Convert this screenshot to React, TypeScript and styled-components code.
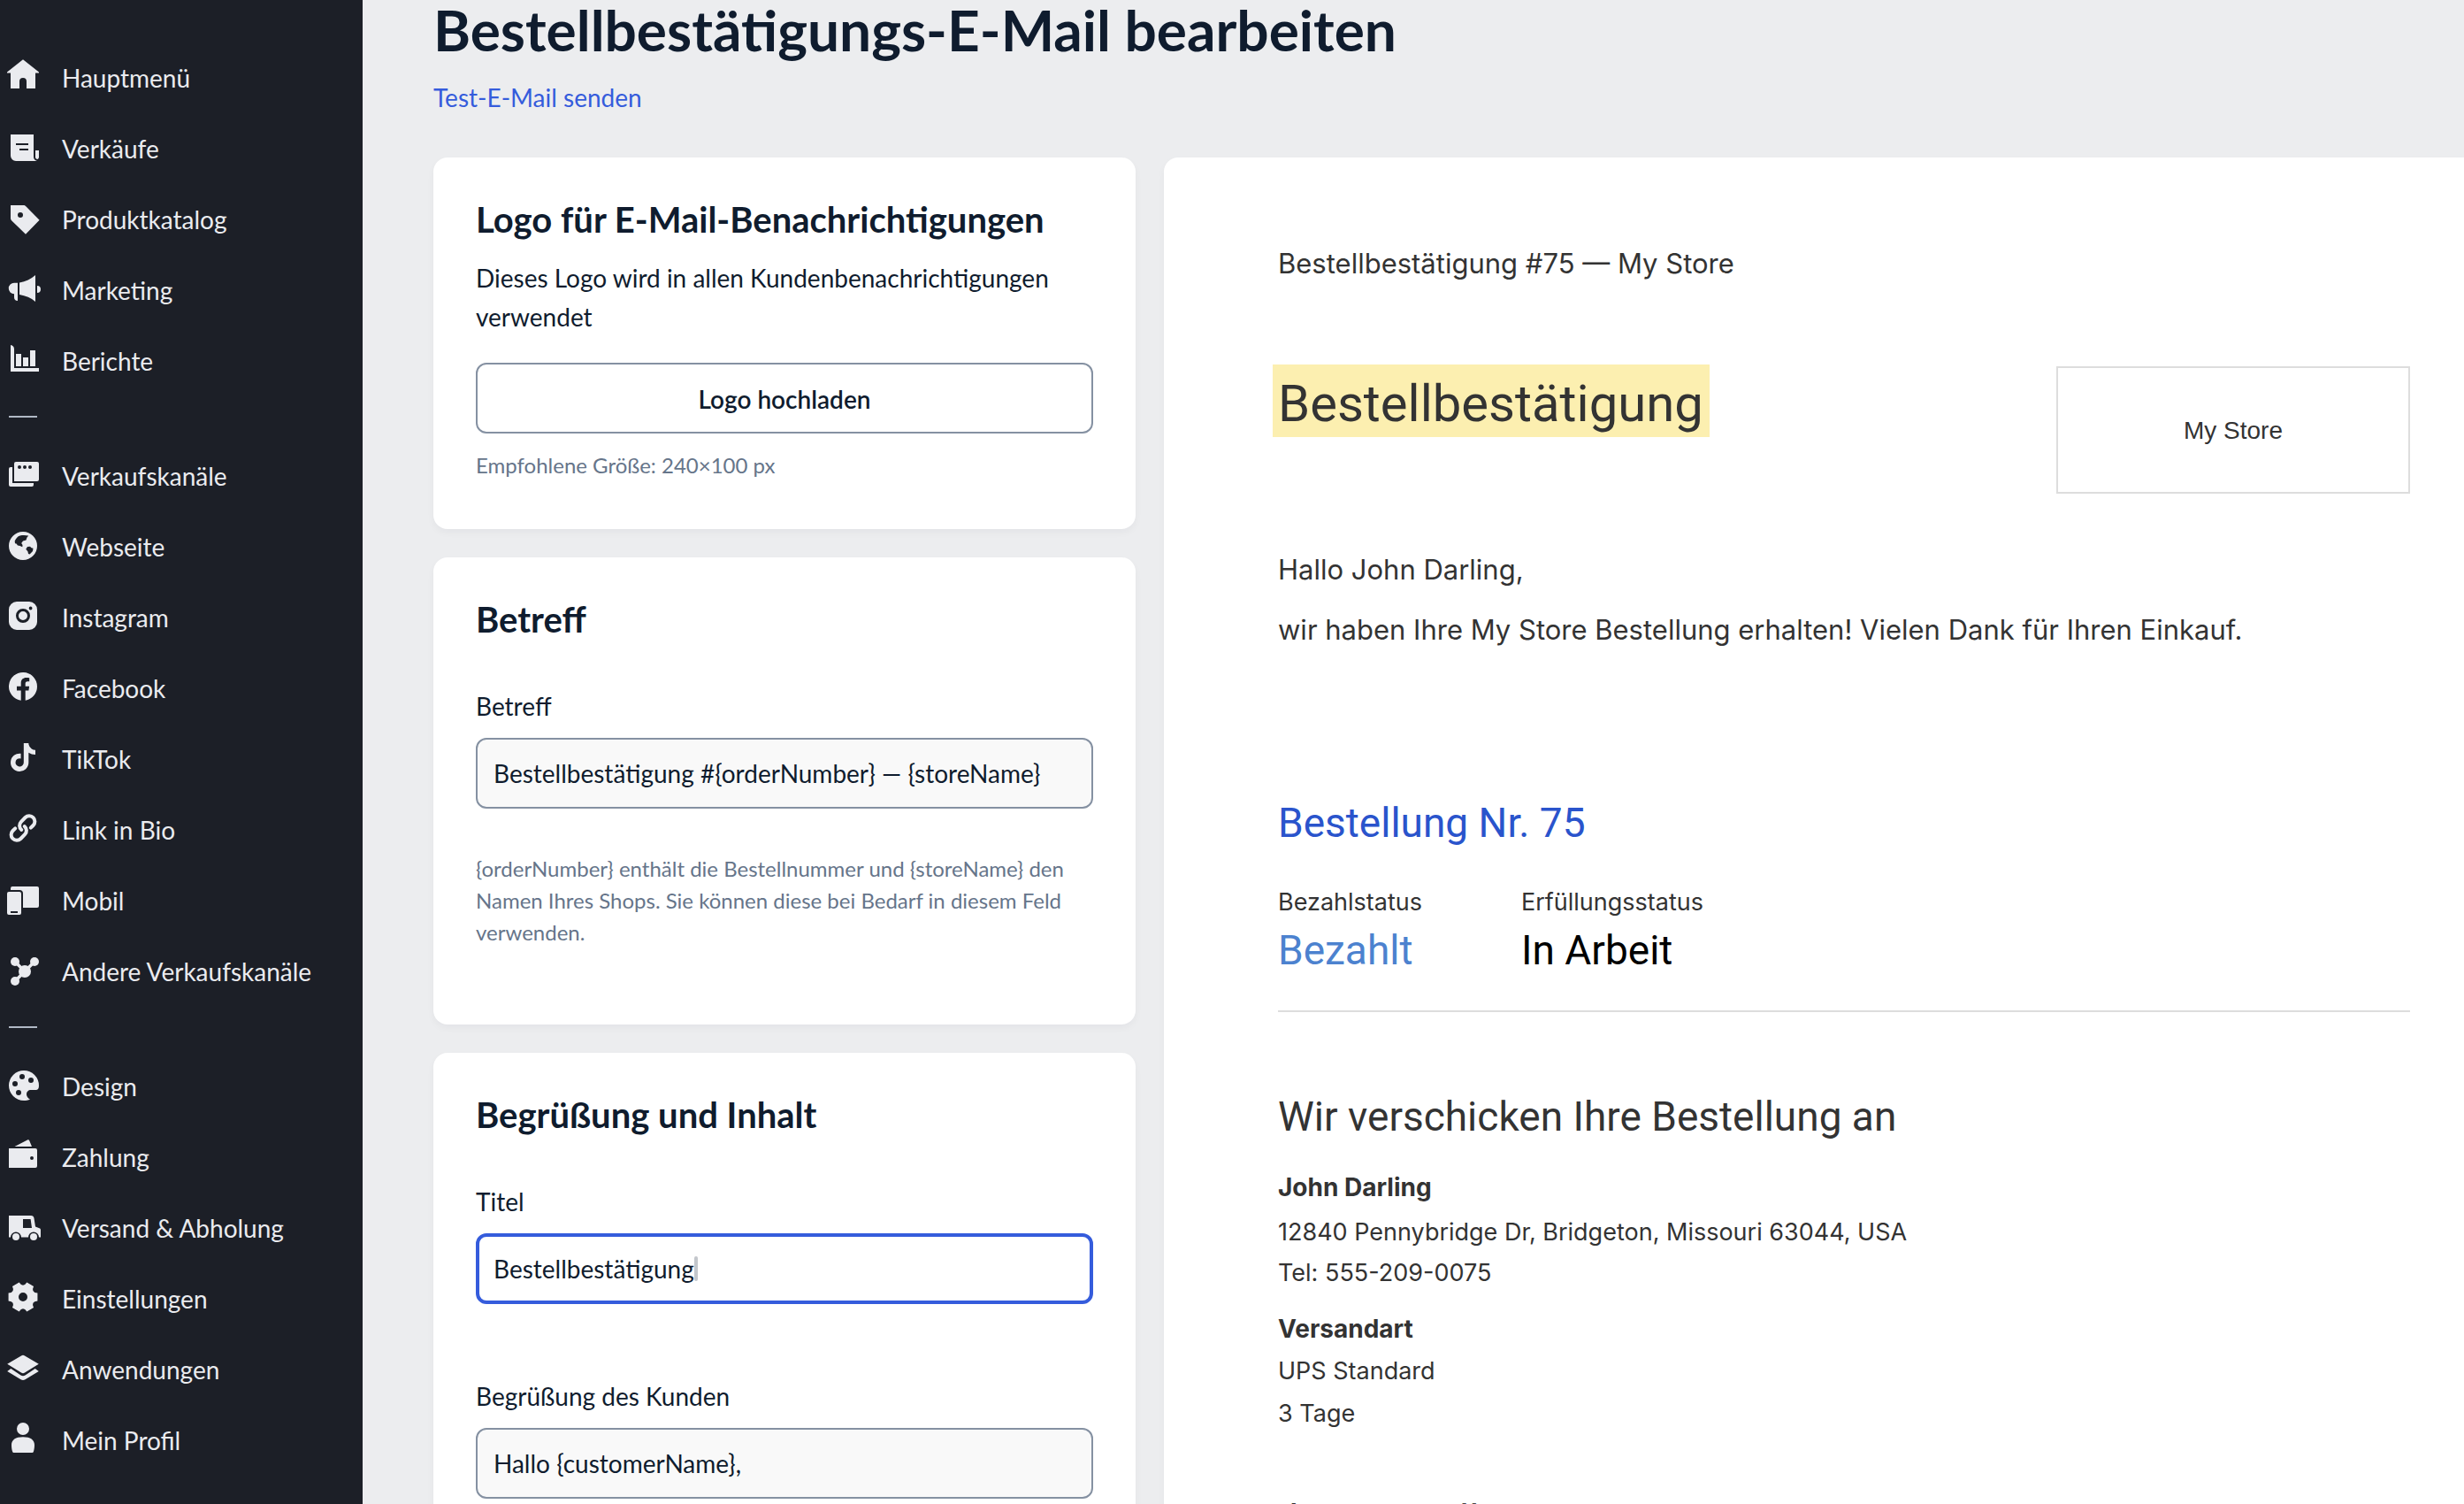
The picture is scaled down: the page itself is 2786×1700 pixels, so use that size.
import React, { useId, useState } from 'react';
import styled, { createGlobalStyle } from 'styled-components';

const GlobalStyle = createGlobalStyle`
  *, *::before, *::after { box-sizing: border-box; }
  body {
    margin: 0;
    background: #ecedef;
    font-family: Lato, "Open Sans", sans-serif;
    color: #0f1c2e;
  }
  h1, h2, h3, p, dl, dt, dd, ul { margin: 0; padding: 0; }
`;

const Page = styled.div`
  display: flex;
  height: 100vh;
  overflow: hidden;
`;

/* ---------- Sidebar ---------- */

const Sidebar = styled.nav`
  flex: 0 0 410px;
  padding-top: 48px;
  background: #1c1f27;
`;

const MenuList = styled.ul`
  list-style: none;

  & + & {
    margin-top: 22px;
    padding-top: 28px;
    background: linear-gradient(#b0b8c5, #b0b8c5) 10px 0 / 32px 2px no-repeat;
  }
`;

const MenuLink = styled.a`
  display: flex;
  align-items: center;
  gap: 22px;
  height: 80px;
  padding-left: 4px;
  color: #eaebef;
  font-size: 28px;
  line-height: 44px;
  text-decoration: none;
`;

const MenuIcon = styled.svg`
  flex: none;
  width: 44px;
  height: 48px;
  fill: currentColor;
`;

const polar = (r: number, deg: number) => {
  const a = (deg * Math.PI) / 180;
  return `${(26 + r * Math.cos(a)).toFixed(2)} ${(22 + r * Math.sin(a)).toFixed(2)}`;
};

const gearPath =
  `M${polar(17, -15)}` +
  [0, 60, 120, 180, 240, 300]
    .map((a) => `L${polar(17, a + 15)}Q${polar(10, a + 30)} ${polar(17, a + 45)}`)
    .join('') +
  'ZM31 22a5 5 0 1 0-10 0a5 5 0 1 0 10 0Z';

const icons: Record<string, React.ReactNode> = {
  home: <path d="M26 3.2 44 17.4V18.4H40V36H30V28a4 4 0 0 0-8 0V36H12V18.4H8V17.4Z" />,
  sales: (
    <path
      fillRule="evenodd"
      d="M12 8H38V33a5 5 0 0 0 4 5H18a6 6 0 0 1-6-6ZM18 18v2h14v-2ZM22 24v2h10v-2ZM40 26h4v7.5a2.6 2.6 0 0 1-1.6 2.5c-1.4 0-2.4-1-2.4-2.5Z"
    />
  ),
  tag: (
    <path
      fillRule="evenodd"
      d="M12 8H26.5c1.2 0 2 .4 2.8 1.2L44.6 24.8 29 40.7 13 25.2c-.7-.7-1-1.4-1-2.4ZM26 19a3 3 0 1 0-6 0a3 3 0 1 0 6 0Z"
    />
  ),
  megaphone: (
    <path d="M22 15.4C29 14.6 35 11.4 40 7V37c-5-4.4-11-6.600-18-8ZM20 15.800V36c-2.500 0-4-1.500-4-4V28.200a6.200 6.200 0 0 1 0-12.400ZM42 19a4 4 0 0 1 0 8Z" />
  ),
  chart: (
    <path d="M12 6c2.500.4 4 2 4 4.500V32H44V36H12ZM18 16h6V30h-6ZM26 20h6V30h-6ZM34 12h6V30h-6Z" />
  ),
  channels: (
    <path
      fillRule="evenodd"
      d="M18 8H42a2 2 0 0 1 2 2V28a2 2 0 0 1-2 2H16V10a2 2 0 0 1 2-2ZM24 14a2 2 0 1 0-4 0a2 2 0 1 0 4 0ZM30 14a2 2 0 1 0-4 0a2 2 0 1 0 4 0ZM36 14a2 2 0 1 0-4 0a2 2 0 1 0 4 0ZM12 14h2V32H38v2a2 2 0 0 1-2 2H12a2 2 0 0 1-2-2V16a2 2 0 0 1 2-2Z"
    />
  ),
  globe: (
    <path
      fillRule="evenodd"
      d="M42 23a16 16 0 1 0-32 0a16 16 0 1 0 32 0ZM16.700 17.500C18 14.500 20 12.300 22.500 11.500c3-.6 6.500-.6 9.700.1L30.500 13.500 29.500 16.500 26 17.500 24.200 20 25.500 22 25.300 24.200 22.500 23 20 22.600 18.500 20.500 17 20.200ZM29.300 26.700 31 24 34 23.700 35.500 25.300 37.500 25.800 37 29 33.600 32.600 32 32 31.500 29.500Z"
    />
  ),
  instagram: (
    <path
      fillRule="evenodd"
      d="M19 6H33a9 9 0 0 1 9 9V29a9 9 0 0 1-9 9H19a9 9 0 0 1-9-9V15a9 9 0 0 1 9-9ZM34 22a8 8 0 1 0-16 0a8 8 0 1 0 16 0ZM31 22a5 5 0 1 1-10 0a5 5 0 1 1 10 0ZM36.500 13.500a1.900 1.900 0 1 0-3.800 0a1.900 1.900 0 1 0 3.800 0Z"
    />
  ),
  facebook: (
    <path d="M42 22a16 16 0 1 0-18.300 15.800V26.500H19v-4.800h4.700v-3.600c0-4 2.300-6.200 6-6.200 1.300 0 2.400.1 3.500.3v4h-2c-2 0-2.500 1-2.500 2.400v3.100h4.400l-.7 4.800h-3.700V37.800A16 16 0 0 0 42 22Z" />
  ),
  tiktok: (
    <path
      transform="translate(12 6) scale(.0625)"
      d="M448 209.910a210.060 210.060 0 0 1-122.770-39.250V349.380A162.550 162.550 0 1 1 185 188.310V278.200a74.620 74.620 0 1 0 52.230 71.180V0h88a121.180 121.180 0 0 0 1.860 22.170A122.180 122.180 0 0 0 381 102.390a121.430 121.430 0 0 0 67 20.140Z"
    />
  ),
  link: (
    <g fill="none" stroke="currentColor" strokeWidth="4" strokeLinecap="round">
      <path d="M34.800 21.700 37.500 19A6.300 6.300 0 0 0 28.600 10L23.900 14.800A6.300 6.300 0 0 0 24.300 24" />
      <path d="M17.200 22.300 14.500 25A6.300 6.300 0 0 0 23.400 34L28.100 29.200A6.300 6.300 0 0 0 27.700 20" />
    </g>
  ),
  mobile: (
    <path
      fillRule="evenodd"
      d="M12 12V10a2 2 0 0 1 2-2H42a2 2 0 0 1 2 2V30a2 2 0 0 1-2 2H26V16a4 4 0 0 0-4-4ZM10 14H22a2 2 0 0 1 2 2V38a2 2 0 0 1-2 2H10a2 2 0 0 1-2-2V16a2 2 0 0 1 2-2ZM12 36v2h8v-2Z"
    />
  ),
  nodes: (
    <g>
      <path d="M17 13 28 24 39 13M28 24 17 35" stroke="currentColor" strokeWidth="3.500" fill="none" />
      <circle cx="17" cy="13" r="5" />
      <circle cx="39" cy="13" r="5" />
      <circle cx="17" cy="35" r="5" />
      <circle cx="28" cy="24" r="7" />
    </g>
  ),
  palette: (
    <path
      fillRule="evenodd"
      d="M27 6a17 17 0 0 0 0 34c2.500 0 4.900-.5 7-1.300-2.600-1.500-4-3.600-4-5.700 0-3 2-5 5-5h5.500C43 28 44 26.200 44 23A17 17 0 0 0 27 6ZM28 13a3 3 0 1 0-6 0a3 3 0 1 0 6 0ZM38 17a3 3 0 1 0-6 0a3 3 0 1 0 6 0ZM20 21a3 3 0 1 0-6 0a3 3 0 1 0 6 0ZM24 31a3 3 0 1 0-6 0a3 3 0 1 0 6 0Z"
    />
  ),
  wallet: (
    <path
      fillRule="evenodd"
      d="M16.500 12 31 4.500c.9-.5 1.700-.3 2.100.6L36 12ZM10 14H40a2 2 0 0 1 2 2V34a2 2 0 0 1-2 2H10ZM38 25a2 2 0 1 0-4 0a2 2 0 1 0 4 0Z"
    />
  ),
  truck: (
    <g>
      <path
        fillRule="evenodd"
        d="M10 10H35c2 0 3.200 1 3.500 3L40 22.500 44.500 24.200c1 .4 1.500 1.100 1.500 2.100V34.500H44a6 6 0 0 0-12 0H24a6 6 0 0 0-12 0H10ZM26 14V24H36L34.600 14Z"
      />
      <circle cx="18" cy="34" r="4" />
      <circle cx="38" cy="34" r="4" />
    </g>
  ),
  gear: <path fillRule="evenodd" d={gearPath} />,
  layers: (
    <path d="M24 8.400q2-1.200 4 0L43.800 17.700 28 27.600q-2 1.200-4 0L8.200 17.700ZM12.300 23 23.500 30.500q2.500 1.500 5 0L39.700 23 43.800 26 28.500 35.200q-2.500 1.500-5 0L8.200 26Z" />
  ),
  user: (
    <path d="M33 11a7 7 0 1 0-14 0a7 7 0 1 0 14 0ZM26 20.200c8.500 0 13 3.300 13 9 0 3-.4 5.200-1 7.300-.3 1-1 1.500-2 1.500H16c-1 0-1.700-.5-2-1.500-.6-2.100-1-4.300-1-7.300 0-5.700 4.500-9 13-9Z" />
  ),
};

const menuGroups: { icon: string; label: string }[][] = [
  [
    { icon: 'home', label: 'Hauptmenü' },
    { icon: 'sales', label: 'Verkäufe' },
    { icon: 'tag', label: 'Produktkatalog' },
    { icon: 'megaphone', label: 'Marketing' },
    { icon: 'chart', label: 'Berichte' },
  ],
  [
    { icon: 'channels', label: 'Verkaufskanäle' },
    { icon: 'globe', label: 'Webseite' },
    { icon: 'instagram', label: 'Instagram' },
    { icon: 'facebook', label: 'Facebook' },
    { icon: 'tiktok', label: 'TikTok' },
    { icon: 'link', label: 'Link in Bio' },
    { icon: 'mobile', label: 'Mobil' },
    { icon: 'nodes', label: 'Andere Verkaufskanäle' },
  ],
  [
    { icon: 'palette', label: 'Design' },
    { icon: 'wallet', label: 'Zahlung' },
    { icon: 'truck', label: 'Versand & Abholung' },
    { icon: 'gear', label: 'Einstellungen' },
    { icon: 'layers', label: 'Anwendungen' },
    { icon: 'user', label: 'Mein Profil' },
  ],
];

/* ---------- Main area ---------- */

const Main = styled.main`
  flex: 1;
  min-width: 0;
  padding-left: 80px;
`;

const PageTitle = styled.h1`
  font-size: 64px;
  line-height: 68px;
  font-weight: 700;
`;

const TestLink = styled.a`
  display: inline-block;
  margin-top: 20px;
  color: #355cdc;
  font-size: 28px;
  line-height: 44px;
  text-decoration: none;
`;

const Columns = styled.div`
  display: grid;
  grid-template-columns: minmax(600px, 794fr) 1470fr;
  align-items: start;
  gap: 32px;
  margin-top: 46px;
`;

const Settings = styled.div`
  display: flex;
  flex-direction: column;
  gap: 32px;
`;

const Card = styled.section`
  padding: 46px 48px 54px;
  border-radius: 16px;
  background: #fff;
  box-shadow: 0 4px 8px rgba(15, 28, 46, 0.04);
`;

const CardTitle = styled.h2`
  font-size: 40px;
  line-height: 48px;
  font-weight: 700;
`;

const CardText = styled.p`
  margin-top: 20px;
  font-size: 28px;
  line-height: 44px;
`;

const UploadButton = styled.button`
  display: block;
  width: 100%;
  height: 80px;
  margin: 30px 0 18px;
  padding: 2px 0 0;
  border: 2px solid #8591a2;
  border-radius: 12px;
  background: #fff;
  color: inherit;
  font: 600 28px/44px Lato, "Open Sans", sans-serif;
`;

const Hint = styled.p`
  color: #66758a;
  font-size: 24px;
  line-height: 36px;
`;

const Fields = styled.div`
  display: flex;
  flex-direction: column;
  gap: 82px;
  margin-top: 52px;
`;

const FieldHint = styled(Hint)`
  margin: 50px 0 32px;
`;

const Label = styled.label`
  display: block;
  margin-bottom: 14px;
  font-size: 28px;
  line-height: 44px;
`;

const InputFrame = styled.div<{ $active?: boolean }>`
  display: flex;
  align-items: center;
  height: 80px;
  padding: 0 ${(p) => (p.$active ? 16 : 18)}px;
  border: ${(p) => (p.$active ? '4px solid #355cdc' : '2px solid #8591a2')};
  border-radius: 12px;
  background: ${(p) => (p.$active ? '#fff' : '#f9f9f9')};
`;

const Input = styled.input<{ $active?: boolean }>`
  ${(p) => (p.$active ? 'field-sizing: content;' : 'flex: 1; min-width: 0;')}
  padding: 0;
  border: 0;
  outline: 0;
  background: none;
  color: inherit;
  font: 400 28px/44px Lato, "Open Sans", sans-serif;
`;

const Caret = styled.span`
  width: 4px;
  height: 28px;
  border-radius: 2px;
  background: #c3c7cc;
`;

function Field({ label, initial, active }: { label: string; initial: string; active?: boolean }) {
  const id = useId();
  const [value, setValue] = useState(initial);
  return (
    <div>
      <Label htmlFor={id}>{label}</Label>
      <InputFrame $active={active}>
        <Input
          id={id}
          type="text"
          $active={active}
          value={value}
          onChange={(e) => setValue(e.target.value)}
        />
        {active && <Caret />}
      </InputFrame>
    </div>
  );
}

/* ---------- E-mail preview ---------- */

const Preview = styled.article`
  min-height: 1600px;
  padding: 96px 61px 0 129px;
  border-radius: 16px 0 0 16px;
  background: #fff;
  box-shadow: 0 4px 8px rgba(15, 28, 46, 0.04);
  color: #333;
  font-family: Inter, Roboto, sans-serif;
`;

const Subject = styled.p`
  font-size: 31px;
  line-height: 48px;
`;

const MailHead = styled.header`
  display: flex;
  align-items: flex-start;
  justify-content: space-between;
  margin-top: 90px;
`;

const MailTitle = styled.h2`
  margin-left: -6px;
  padding: 6px 7px 0 6px;
  background: #fcefb0;
  font-family: Roboto, Inter, sans-serif;
  font-size: 58px;
  line-height: 76px;
  font-weight: 400;
`;

const StoreLogo = styled.div`
  width: 400px;
  height: 144px;
  margin-top: 2px;
  border: 2px solid #ddd;
  font: 28px/142px "Liberation Sans", Arial, sans-serif;
  text-align: center;
`;

const Greeting = styled.div`
  display: flex;
  flex-direction: column;
  gap: 24px;
  margin-top: 64px;
  font-size: 31px;
  line-height: 44px;
`;

const MailHeading = styled.h3`
  font-family: Roboto, Inter, sans-serif;
  font-size: 46px;
  line-height: 56px;
  font-weight: 400;
`;

const OrderHeading = styled(MailHeading)`
  margin-top: 168px;
  color: #2a54cc;
`;

const StatusList = styled.dl`
  display: flex;
  gap: 112px;
  margin-top: 44px;
  padding-bottom: 40px;
  border-bottom: 2px solid #ddd;
`;

const StatusName = styled.dt`
  font-size: 27px;
  line-height: 36px;
`;

const StatusValue = styled.dd<{ $color: string }>`
  margin-top: 8px;
  color: ${(p) => p.$color};
  font-family: Roboto, Inter, sans-serif;
  font-size: 46px;
  line-height: 56px;
`;

const ShipHeading = styled(MailHeading)`
  margin: 90px 0 28px;
`;

const MailText = styled.p`
  font-size: 27px;
  line-height: 48px;
`;

const MailLabel = styled.p`
  font-size: 28px;
  line-height: 48px;
  font-weight: 700;
`;

const Address = styled.address`
  margin: 4px 0 16px;
  font-size: 27px;
  line-height: 46px;
  font-style: normal;
`;

const ItemsHeading = styled(MailHeading)`
  margin-top: 68px;
`;

export default function App() {
  return (
    <Page>
      <GlobalStyle />
      <Sidebar>
        {menuGroups.map((group, i) => (
          <MenuList key={i}>
            {group.map((item) => (
              <li key={item.label}>
                <MenuLink href="#">
                  <MenuIcon viewBox="4 0 44 48" aria-hidden="true">
                    {icons[item.icon]}
                  </MenuIcon>
                  {item.label}
                </MenuLink>
              </li>
            ))}
          </MenuList>
        ))}
      </Sidebar>
      <Main>
        <PageTitle>Bestellbestätigungs-E-Mail bearbeiten</PageTitle>
        <TestLink href="#">Test-E-Mail senden</TestLink>
        <Columns>
          <Settings>
            <Card>
              <CardTitle>Logo für E-Mail-Benachrichtigungen</CardTitle>
              <CardText>Dieses Logo wird in allen Kundenbenachrichtigungen verwendet</CardText>
              <UploadButton type="button">Logo hochladen</UploadButton>
              <Hint>Empfohlene Größe: 240×100 px</Hint>
            </Card>
            <Card>
              <CardTitle>Betreff</CardTitle>
              <Fields>
                <Field
                  label="Betreff"
                  initial="Bestellbestätigung #{orderNumber} — {storeName}"
                />
              </Fields>
              <FieldHint>
                {'{orderNumber} enthält die Bestellnummer und {storeName} den Namen Ihres Shops. Sie können diese bei Bedarf in diesem Feld verwenden.'}
              </FieldHint>
            </Card>
            <Card>
              <CardTitle>Begrüßung und Inhalt</CardTitle>
              <Fields>
                <Field label="Titel" initial="Bestellbestätigung" active />
                <Field label="Begrüßung des Kunden" initial="Hallo {customerName}," />
              </Fields>
            </Card>
          </Settings>
          <Preview>
            <Subject>Bestellbestätigung #75 — My Store</Subject>
            <MailHead>
              <MailTitle>Bestellbestätigung</MailTitle>
              <StoreLogo>My Store</StoreLogo>
            </MailHead>
            <Greeting>
              <p>Hallo John Darling,</p>
              <p>wir haben Ihre My Store Bestellung erhalten! Vielen Dank für Ihren Einkauf.</p>
            </Greeting>
            <OrderHeading>Bestellung Nr. 75</OrderHeading>
            <StatusList>
              <div>
                <StatusName>Bezahlstatus</StatusName>
                <StatusValue $color="#4c82cf">Bezahlt</StatusValue>
              </div>
              <div>
                <StatusName>Erfüllungsstatus</StatusName>
                <StatusValue $color="#000">In Arbeit</StatusValue>
              </div>
            </StatusList>
            <ShipHeading>Wir verschicken Ihre Bestellung an</ShipHeading>
            <MailLabel>John Darling</MailLabel>
            <Address>
              12840 Pennybridge Dr, Bridgeton, Missouri 63044, USA
              <br />
              Tel: 555-209-0075
            </Address>
            <MailLabel>Versandart</MailLabel>
            <MailText>UPS Standard</MailText>
            <MailText>3 Tage</MailText>
            <ItemsHeading>Ihre Bestellung</ItemsHeading>
          </Preview>
        </Columns>
      </Main>
    </Page>
  );
}
